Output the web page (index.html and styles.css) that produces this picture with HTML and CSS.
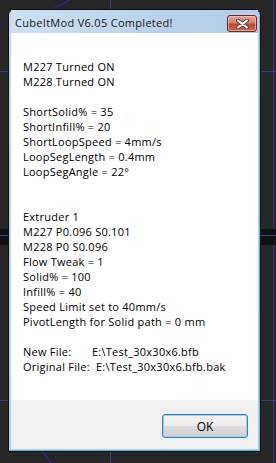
FILE: index.html
```html
<!DOCTYPE html>
<html>
<head>
    <title>CubeItMod V6.05 Completed!</title>
    <link rel="stylesheet" href="styles.css">
</head>
<body>
    <svg class="desktop" width="276" height="463" viewBox="0 0 276 463">
        <rect x="0" y="229" width="276" height="16" fill="#111"/>
        <line x1="0" y1="71.5" x2="276" y2="71.5" stroke="#3d3a8a"/>
        <line x1="0" y1="235.5" x2="276" y2="235.5" stroke="#3d3a8a"/>
        <line x1="0" y1="400.5" x2="276" y2="400.5" stroke="#3d3a8a"/>
        <line x1="110.5" y1="0" x2="110.5" y2="463" stroke="#3d3a8a"/>
        <line x1="273.5" y1="0" x2="273.5" y2="229" stroke="#3d3a8a"/>
        <line x1="273.5" y1="245" x2="273.5" y2="463" stroke="#3d3a8a"/>
        <line x1="55" y1="8" x2="70" y2="0" stroke="#2a2ad8"/>
        <line x1="43" y1="452" x2="51" y2="463" stroke="#2a2ad8"/>
    </svg>

    <div class="window">
        <div class="titlebar">
            <span class="title">CubeItMod V6.05 Completed!</span>
            <button class="close">
                <svg width="13" height="10" viewBox="0 0 13 10">
                    <path d="M2 1.5 L11 8.5 M11 1.5 L2 8.5" stroke="#4a4a4a" stroke-width="4" stroke-linecap="round"/>
                    <path d="M2 1.5 L11 8.5 M11 1.5 L2 8.5" stroke="#fff" stroke-width="2" stroke-linecap="round"/>
                </svg>
            </button>
        </div>
        <div class="message">
<div>M227 Turned ON</div>
<div>M228 Turned ON</div>
<div>&nbsp;</div>
<div>ShortSolid% = 35</div>
<div>ShortInfill% = 20</div>
<div>ShortLoopSpeed = 4mm/s</div>
<div>LoopSegLength = 0.4mm</div>
<div>LoopSegAngle = 22°</div>
<div>&nbsp;</div>
<div>&nbsp;</div>
<div>Extruder 1</div>
<div>M227 P0.096 S0.101</div>
<div>M228 P0 S0.096</div>
<div>Flow Tweak = 1</div>
<div>Solid% = 100</div>
<div>Infill% = 40</div>
<div>Speed Limit set to 40mm/s</div>
<div>PivotLength for Solid path = 0 mm</div>
<div>&nbsp;</div>
<div><span class="label new">New File:</span>E:\Test_30x30x6.bfb</div>
<div><span class="label orig">Original File:</span>E:\Test_30x30x6.bfb.bak</div>
        </div>
        <div class="footer">
            <button class="ok">OK</button>
        </div>
    </div>
</body>
</html>
```

FILE: styles.css
```css
body {
    margin: 0;
    width: 276px;
    height: 463px;
    background: #262626;
    overflow: hidden;
    position: relative;
    font-family: "Open Sans", "Noto Sans", sans-serif;
    font-size: 11px;
    color: #000;
}
.desktop {
    position: absolute;
    left: 0;
    top: 0;
}
.window {
    position: absolute;
    left: 8px;
    top: 9px;
    width: 247px;
    height: 439px;
    border: 1px solid #0d0d0d;
    border-radius: 6px 6px 0 0;
    padding: 0 2px 2px 2px;
    background: linear-gradient(#c4d9ef, #b7d0ea);
    box-shadow: inset -1px -1px 0 #3fc4ea;
    display: flex;
    flex-direction: column;
}
.titlebar {
    height: 23px;
    display: flex;
    align-items: center;
    justify-content: space-between;
    padding: 0 1px 0 4px;
    background: linear-gradient(100deg, #cfe0f2 0%, #b9d1ea 60%, #b4cde8 100%);
}
.title {
    font-size: 11px;
    letter-spacing: 0.3px;
    color: #1a1a1a;
    margin-top: 1px;
}
.close {
    width: 30px;
    height: 17px;
    padding: 0;
    margin-top: 4px;
    border: 1px solid #6b2b24;
    border-radius: 3px;
    background: linear-gradient(#e7a497 0%, #d87c69 45%, #c2452e 55%, #d0664c 100%);
    box-shadow: inset 0 0 0 1px rgba(255, 220, 210, 0.5);
    display: flex;
    align-items: center;
    justify-content: center;
}
.message {
    flex: 1;
    background: #fff;
    padding: 26px 0 0 12px;
    line-height: 15px;
    letter-spacing: 0.25px;
    white-space: nowrap;
}
.label {
    display: inline-block;
}
.label.new {
    width: 69px;
}
.label.orig {
    width: 73px;
}
.footer {
    height: 49px;
    background: #f0f0f0;
    display: flex;
    justify-content: flex-end;
    align-items: flex-start;
    padding-right: 10px;
}
.ok {
    margin-top: 14px;
    width: 86px;
    height: 24px;
    border: 1px solid #3c7fb1;
    border-radius: 3px;
    background: linear-gradient(#f2f2f2 0%, #ebebeb 50%, #dddddd 51%, #cfcfcf 100%);
    box-shadow: inset 0 0 0 1px #8fd3f4;
    font-family: "Open Sans", "Noto Sans", sans-serif;
    font-size: 12px;
    color: #000;
    padding: 0;
}
```
